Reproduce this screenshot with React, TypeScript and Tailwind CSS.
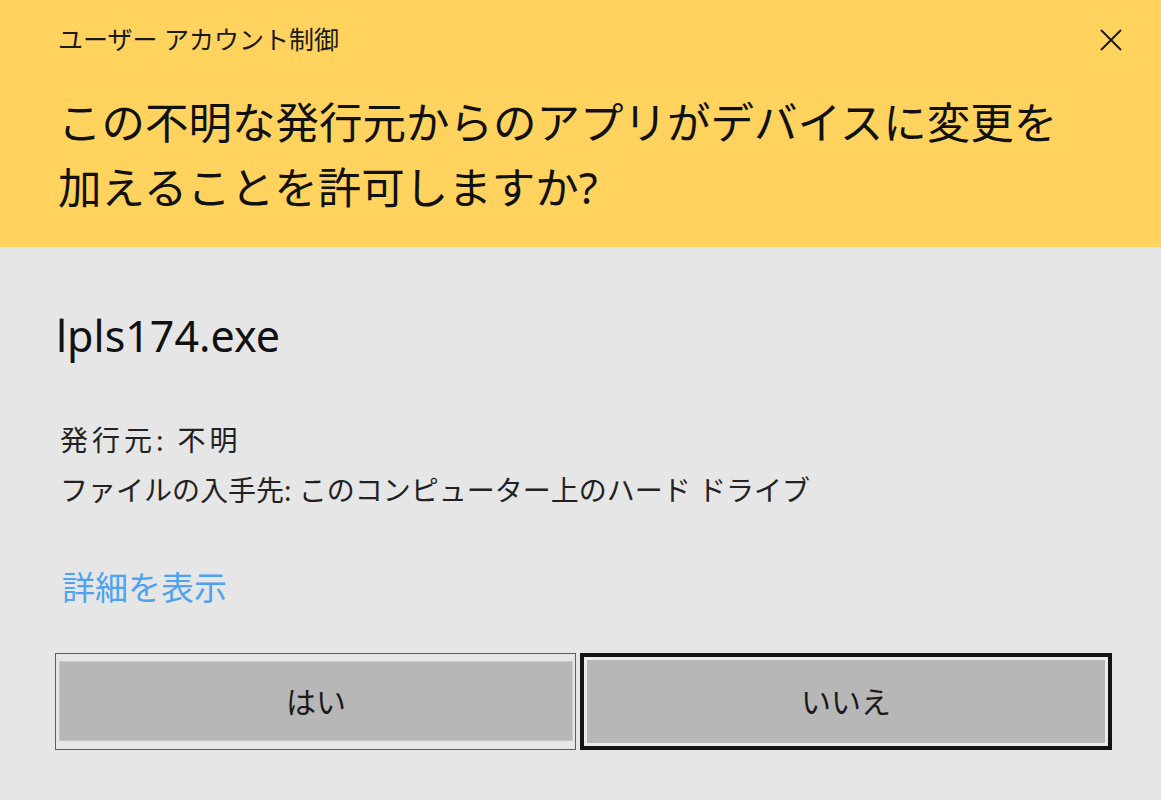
import React from "react"

const font = { fontFamily: '"Noto Sans", "Noto Sans CJK JP", sans-serif' }

function CloseIcon() {
  return (
    <svg width="24" height="24" viewBox="0 0 24 24" fill="none" stroke="#1a1a1a" strokeWidth="2">
      <line x1="2" y1="2" x2="22" y2="22" />
      <line x1="22" y1="2" x2="2" y2="22" />
    </svg>
  )
}

export default function App() {
  return (
    <div className="w-[1161px] h-[800px] bg-[#e6e6e6] flex flex-col overflow-hidden" style={font}>
      {/* Header */}
      <div className="bg-[#ffd35e] h-[247px] flex flex-col pl-[58px]">
        <div className="h-[80px] flex items-center justify-between pr-[38px]">
          <span className="text-[25px] text-[#1a1a1a]">ユーザー アカウント制御</span>
          <CloseIcon />
        </div>
        <div className="mt-[10px] text-[43.5px] leading-[65px] text-[#111]">
          <div>この不明な発行元からのアプリがデバイスに変更を</div>
          <div>加えることを許可しますか?</div>
        </div>
      </div>

      {/* Body */}
      <div className="flex flex-col pl-[56px]">
        <div className="mt-[59px] h-[60px] flex items-center text-[43px] text-[#111]">lpls174.exe</div>
        <div className="mt-[49px] pl-[4px] text-[28px] leading-[50px] text-[#222]">
          <div className="flex items-center">
            <span className="tracking-[4px]">発行元:</span>
            <span className="ml-[10px] tracking-[4px]">不明</span>
          </div>
          <div>ファイルの入手先: このコンピューター上のハード ドライブ</div>
        </div>
        <div className="mt-[48px] pl-[6px] h-[50px] flex items-center text-[33px] text-[#4ea2ee]">詳細を表示</div>

        <div className="mt-[40px] flex gap-[4px] -ml-[1px]">
          {/* red focus frame */}
          <div className="w-[521px] h-[97px] bg-[#ff1a1a] p-[1px]">
            <div className="h-full bg-[#e6e6e6] pt-[7px] pb-[8px] pl-[3px] pr-[2px]">
              <div className="h-full bg-[#b7b7b7] border border-[#c9c9c9] flex items-center justify-center text-[30px] text-[#1a1a1a]">
                はい
              </div>
            </div>
          </div>
          <div className="w-[532px] h-[97px] border-[4px] border-[#141414]">
            <div className="h-full border-[3px] border-[#ececec] bg-[#b7b7b7] flex items-center justify-center text-[30px] text-[#1a1a1a]">
              いいえ
            </div>
          </div>
        </div>
      </div>
    </div>
  )
}
